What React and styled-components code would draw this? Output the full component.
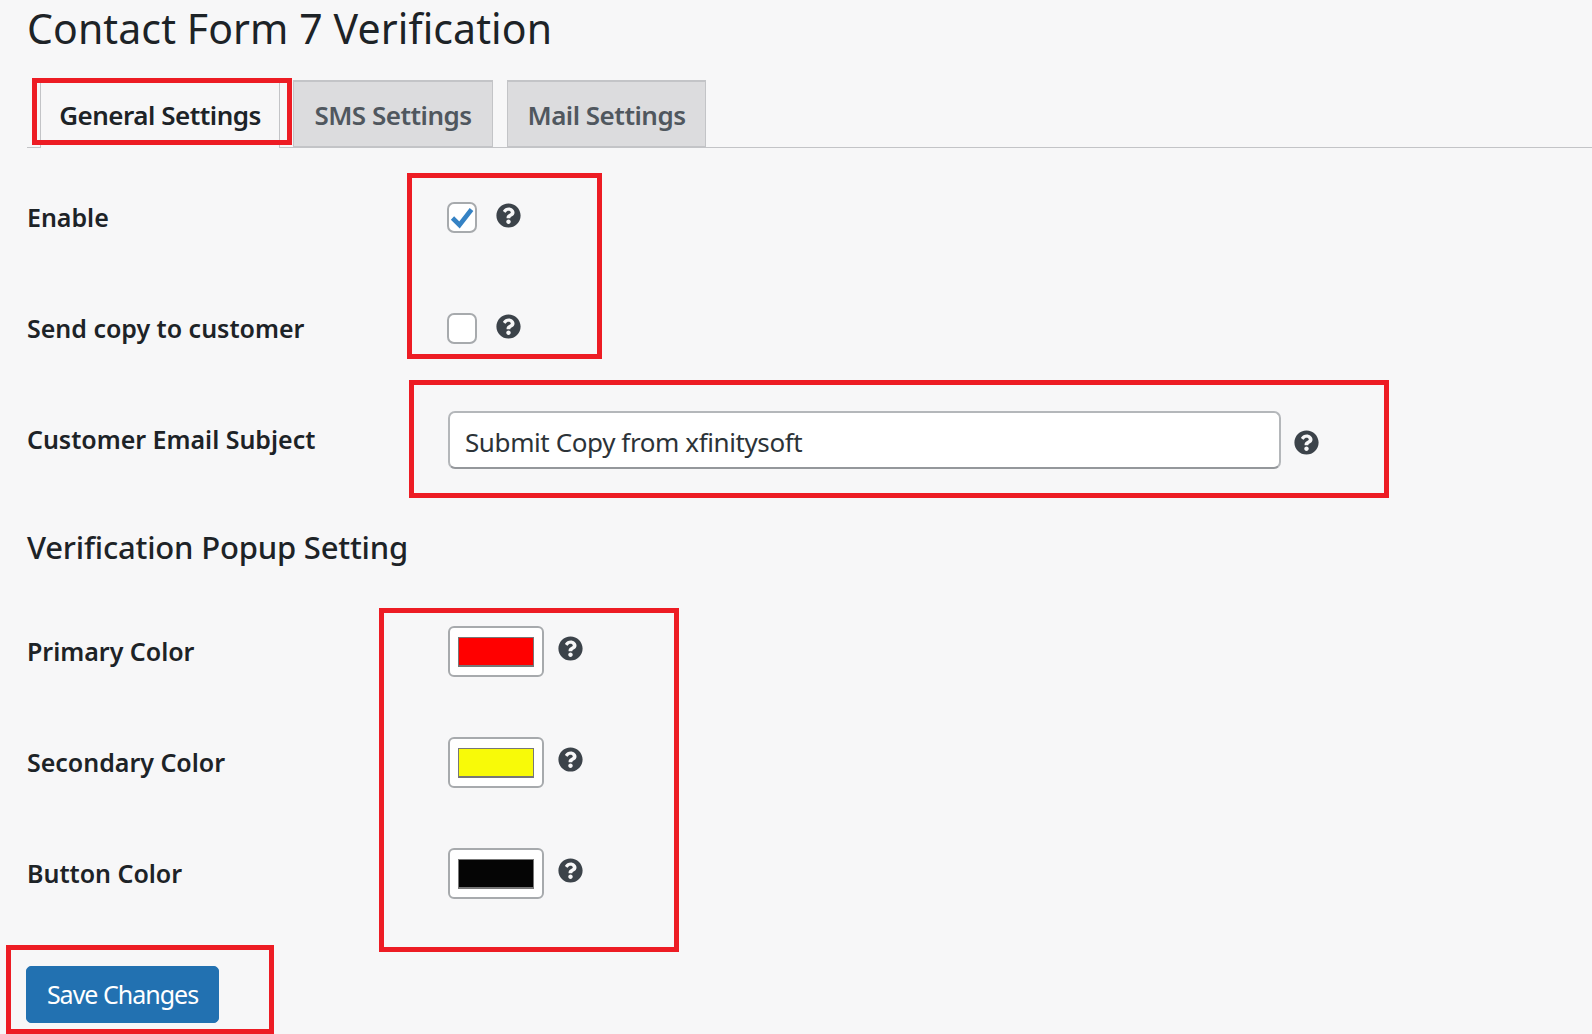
import React from "react";
import styled, { createGlobalStyle } from "styled-components";
import { FaQuestionCircle } from "react-icons/fa";

const GlobalStyle = createGlobalStyle`
  html, body {
    margin: 0;
    padding: 0;
    background: #f7f7f8;
  }
  body {
    font-family: "Noto Sans", "Open Sans", sans-serif;
    color: #1d2327;
  }
`;

const Page = styled.div`
  position: relative;
  width: 1592px;
  height: 1034px;
  overflow: hidden;
  box-sizing: border-box;
  padding: 0 0 0 27px;
`;

const Title = styled.h1`
  margin: 0;
  height: 80px;
  padding-top: 3px;
  box-sizing: border-box;
  font-size: 41px;
  line-height: 50px;
  font-weight: 400;
  letter-spacing: 0.1px;
  color: #1d2327;
`;

const TabBar = styled.div`
  display: flex;
  align-items: flex-end;
  height: 67px;
  border-bottom: 1px solid #c3c4c7;
  padding-left: 13px;
`;

const Tab = styled.div`
  box-sizing: border-box;
  display: flex;
  align-items: center;
  justify-content: center;
  width: ${(p) => p.$width}px;
  height: ${(p) => (p.$active ? 68 : 67)}px;
  margin-left: ${(p) => p.$gap}px;
  margin-bottom: ${(p) => (p.$active ? -1 : 0)}px;
  border: 1px solid #c3c4c7;
  border-top-width: ${(p) => (p.$active ? 1 : 2)}px;
  border-bottom: ${(p) => (p.$active ? "none" : "1px solid #c3c4c7")};
  background: ${(p) => (p.$active ? "#f7f7f8" : "#dcdcde")};
  color: ${(p) => (p.$active ? "#1d2327" : "#50575e")};
  font-size: 26px;
  font-weight: 600;
  letter-spacing: -0.5px;
  padding-top: 1px;
`;

const Form = styled.div`
  display: flex;
  flex-direction: column;
`;

const Row = styled.div`
  display: grid;
  grid-template-columns: 421px 1fr;
  height: ${(p) => p.$height}px;
`;

const Label = styled.div`
  font-size: 25px;
  line-height: 34px;
  font-weight: 600;
  letter-spacing: -0.02px;
  color: #1d2327;
  padding-top: ${(p) => p.$top}px;
`;

const Field = styled.div`
  display: flex;
  align-items: flex-start;
  padding-top: ${(p) => p.$top}px;
`;

const CheckBox = styled.span`
  box-sizing: border-box;
  display: flex;
  align-items: center;
  justify-content: center;
  width: 30px;
  height: 31px;
  margin-left: -1px;
  background: #fff;
  border: 2px solid #a7aaad;
  border-radius: 7px;
`;

const Help = styled.span`
  display: inline-flex;
  color: #3c434a;
  font-size: 25px;
  margin-left: ${(p) => p.$left}px;
  margin-top: ${(p) => p.$top}px;
`;

const TextInput = styled.input`
  box-sizing: border-box;
  width: 833px;
  height: 58px;
  padding: 3px 15px 0;
  background: #fff;
  border: 2px solid #b4b7ba;
  border-bottom-color: #94979b;
  border-radius: 7px;
  font-family: inherit;
  font-size: 26px;
  letter-spacing: -0.4px;
  color: #2c3338;
  outline: none;
`;

const Swatch = styled.span`
  box-sizing: border-box;
  display: flex;
  align-items: center;
  justify-content: center;
  width: 96px;
  height: 51px;
  background: #fff;
  border: 2px solid #a7aaad;
  border-radius: 6px;
`;

const SwatchFill = styled.span`
  box-sizing: border-box;
  width: 76px;
  height: 30px;
  background: ${(p) => p.$color};
  border: 1px solid #777;
  border-bottom-width: 2px;
`;

const SectionHeading = styled.h2`
  margin: 0;
  height: 98px;
  font-size: 31px;
  line-height: 40px;
  font-weight: 500;
  letter-spacing: -0.2px;
  color: #1d2327;
`;

const SaveButton = styled.button`
  box-sizing: border-box;
  display: block;
  width: 193px;
  height: 57px;
  margin: 8px 0 0 -1px;
  padding: 0 0 2px;
  background: #2271b1;
  border: 1px solid #2271b1;
  border-radius: 5px;
  font-family: inherit;
  font-size: 25px;
  letter-spacing: -1px;
  color: #fff;
`;

const Callout = styled.div`
  position: absolute;
  box-sizing: border-box;
  left: ${(p) => p.$x}px;
  top: ${(p) => p.$y}px;
  width: ${(p) => p.$w}px;
  height: ${(p) => p.$h}px;
  border: 5px solid #ed1c24;
  pointer-events: none;
`;

const CheckMark = () => (
  <svg width="24" height="22" viewBox="0 0 24 22" aria-hidden="true">
    <path d="M2.5 11 L9.5 18 L21.5 2.5" fill="none" stroke="#3582c4" strokeWidth="4.6" />
  </svg>
);

const colorRows = [
  { label: "Primary Color", color: "#ff0000" },
  { label: "Secondary Color", color: "#f8fa08" },
  { label: "Button Color", color: "#050505" },
];

const callouts = [
  { x: 32, y: 78, w: 260, h: 67 },
  { x: 407, y: 173, w: 195, h: 186 },
  { x: 409, y: 380, w: 980, h: 118 },
  { x: 379, y: 608, w: 300, h: 344 },
  { x: 6, y: 945, w: 268, h: 89 },
];

export default function App() {
  return (
    <Page>
      <GlobalStyle />
      <Title>Contact Form 7 Verification</Title>
      <TabBar>
        <Tab $active $width={240} $gap={0}>General Settings</Tab>
        <Tab $width={200} $gap={13}>SMS Settings</Tab>
        <Tab $width={199} $gap={14}>Mail Settings</Tab>
      </TabBar>
      <Form>
        <Row $height={111}>
          <Label $top={52}>Enable</Label>
          <Field $top={54}>
            <CheckBox><CheckMark /></CheckBox>
            <Help $left={19} $top={1}><FaQuestionCircle /></Help>
          </Field>
        </Row>
        <Row $height={111}>
          <Label $top={52}>Send copy to customer</Label>
          <Field $top={54}>
            <CheckBox />
            <Help $left={19} $top={1}><FaQuestionCircle /></Help>
          </Field>
        </Row>
        <Row $height={157}>
          <Label $top={52}>Customer Email Subject</Label>
          <Field $top={41}>
            <TextInput defaultValue="Submit Copy from xfinitysoft" />
            <Help $left={13} $top={19}><FaQuestionCircle /></Help>
          </Field>
        </Row>
        <SectionHeading>Verification Popup Setting</SectionHeading>
        {colorRows.map((row) => (
          <Row key={row.label} $height={111}>
            <Label $top={9}>{row.label}</Label>
            <Field $top={1}>
              <Swatch><SwatchFill $color={row.color} /></Swatch>
              <Help $left={14} $top={10}><FaQuestionCircle /></Help>
            </Field>
          </Row>
        ))}
        <SaveButton>Save Changes</SaveButton>
      </Form>
      {callouts.map((c) => (
        <Callout key={c.x} $x={c.x} $y={c.y} $w={c.w} $h={c.h} />
      ))}
    </Page>
  );
}
